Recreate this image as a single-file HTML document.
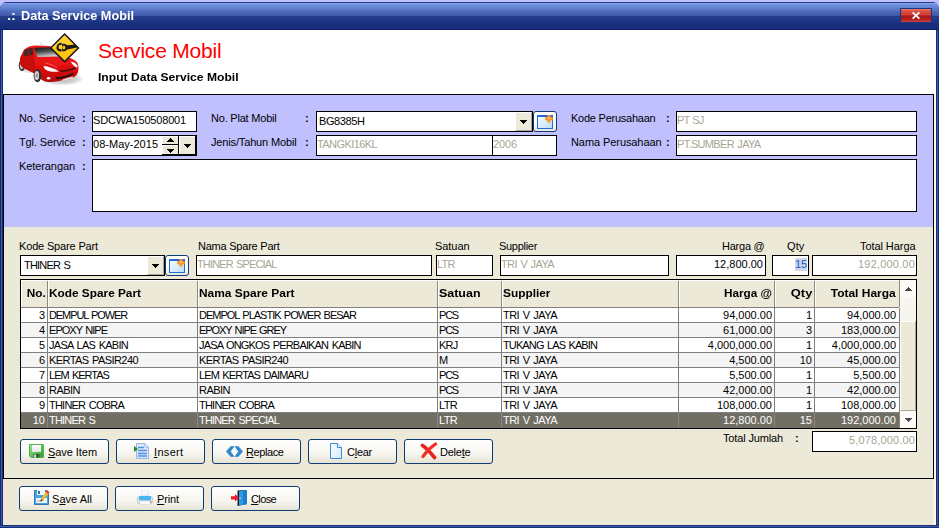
<!DOCTYPE html>
<html>
<head>
<meta charset="utf-8">
<title>Data Service Mobil</title>
<style>
*{box-sizing:border-box;margin:0;padding:0}
html,body{width:939px;height:528px;overflow:hidden}
body{background:#c0c0ff;font-family:"Liberation Sans","DejaVu Sans",sans-serif;font-size:11px;color:#000;position:relative}
.abs,.lbl,.inp,.btn,.cell{position:absolute}
#win{position:absolute;left:0;top:2px;width:939px;height:526px;background:linear-gradient(90deg,#14286e 0,#14286e 1px,#3e5cac 1px,#3e5cac 2px,#1a2e6e 2px,#1a2e6e 3px,#2a4eaa 3px,#2a4eaa 936px,#1a2e6e 936px,#1a2e6e 937px,#3e5cac 937px,#3e5cac 938px,#14286e 938px);border-radius:7px 7px 0 0}
#winb{position:absolute;left:0;top:525px;width:939px;height:3px;background:linear-gradient(#1c2e7c 0,#1c2e7c 1px,#3c5aa8 1px,#3c5aa8 2px,#14307a 2px)}
#title{position:absolute;left:0;top:0;width:939px;height:28px;border-radius:7px 7px 0 0;
 background:linear-gradient(#2a3a88 0,#2a3a88 1px,#8cb0f8 1px,#7898e6 2px,#6e8ede 3px,#6080d0 6px,#4c68b8 10px,#3e58a8 14px,#263e8c 14px,#20388a 18px,#18307a 22px,#1a2c7c 27px,#0c1c68 27px)}
#title .t{position:absolute;left:7px;top:6px;color:#fff;font-weight:bold;font-size:13.5px;white-space:nowrap;line-height:15px}
#close{position:absolute;left:901px;top:7px;width:30px;height:13px;box-shadow:0 0 0 1px #1a3488;
 background:linear-gradient(#f08878 0,#e25a4c 1px,#d03c34 6px,#a81818 7px,#b42420 11px,#d04840 13px)}
#hdr{position:absolute;left:3px;top:30px;width:933px;height:64px;background:#fff}
#pan1{position:absolute;left:3px;top:94px;width:931px;height:133px;background:#c0c0ff;border:1px solid #000;border-bottom:0}
#pan2{position:absolute;left:3px;top:227px;width:931px;height:252px;background:#ece9d8;border:1px solid #000;border-top:0}
#bg{position:absolute;left:3px;top:94px;width:933px;height:431px;background:linear-gradient(90deg,#ece9d8 0,#ece9d8 930px,#fbfae8 931px)}
.lbl{white-space:nowrap;line-height:13px;font-size:11px}
.inp{word-spacing:1px;background:#fff;border:1px solid #000;height:21px;line-height:17px;padding-left:0;white-space:nowrap;overflow:hidden;font-size:11px}
.dis{color:#a8a596}
.r{text-align:right;padding-right:3px;padding-left:0}
.btn{height:25px;width:89px;border:1px solid #103c74;border-radius:3px;background:linear-gradient(#ffffff 0,#f6f5ee 60%,#e6e3d4 100%);line-height:23px;font-size:11px;white-space:nowrap}
.btn>span{position:absolute;top:1px}
.btn u{text-decoration:underline}
.cell{word-spacing:1.2px;white-space:nowrap;overflow:hidden;height:15px;line-height:15px;font-size:11px}
.hd{font-weight:bold;word-spacing:0}
.cb{position:absolute;width:17px;height:19px;background:#ece9d8;border-left:1px solid #fff;border-top:1px solid #fff;border-right:1px solid #aca899;border-bottom:1px solid #aca899}
.ib{position:absolute;width:24px;height:21px;border:1px solid #103c74;border-radius:3px;background:linear-gradient(#fff 0,#fbfbf8 60%,#ebe8da 100%)}

</style>
</head>
<body>
<div id="win">
 <div id="title"><div class="t"><span style="display:inline-block;transform:scaleX(1.0909);transform-origin:left center;">.:</span></div><div class="t" style="left:21px"><span style="display:inline-block;transform:scaleX(0.9413);transform-origin:left center;">Data Service Mobil</span></div>
  <div id="close"><svg width="30" height="13" viewBox="0 0 30 13" style="position:absolute;left:0;top:0"><path d="M11.6 3.4L18.4 9.6M18.4 3.4L11.6 9.6" stroke="#fff" stroke-width="1.7" fill="none"/></svg></div>
 </div>
</div>
<div id="winb"></div>
<div id="bg"></div>
<div id="hdr">
 <div class="abs" style="left:95px;top:8px;font-size:21px;color:#f00;white-space:nowrap;line-height:26px"><span style="letter-spacing:-0.20px;">Service Mobil</span></div>
 <div class="abs" style="left:95px;top:41px;font-size:11px;font-weight:bold;white-space:nowrap;line-height:13px"><span style="display:inline-block;transform:scaleX(1.0998);transform-origin:left center;">Input Data Service Mobil</span></div>
</div>
<!--CAR--><svg class="abs" style="left:14px;top:31px" width="72" height="58" viewBox="14 31 72 58"><defs><linearGradient id="cws" x1="0" y1="0" x2="0.3" y2="1"><stop offset="0" stop-color="#141414"/><stop offset=".5" stop-color="#4a4a4a"/><stop offset="1" stop-color="#c8c8c8"/></linearGradient><linearGradient id="cbd" x1="0" y1="0" x2="0" y2="1"><stop offset="0" stop-color="#f02020"/><stop offset=".6" stop-color="#e01010"/><stop offset="1" stop-color="#b00808"/></linearGradient><radialGradient id="csh" cx=".5" cy=".5" r=".5"><stop offset="0" stop-color="#b0b0b0"/><stop offset=".7" stop-color="#d8d8d8"/><stop offset="1" stop-color="#ffffff"/></radialGradient><filter id="cbl" x="-10%" y="-10%" width="120%" height="120%"><feGaussianBlur stdDeviation="0.45"/></filter></defs><g filter="url(#cbl)"><ellipse cx="62" cy="79" rx="22" ry="6.5" fill="url(#csh)"/><ellipse cx="30" cy="70" rx="8" ry="3" fill="#e4e4e4"/><!-- rear wheel --><ellipse cx="22" cy="65.5" rx="3.3" ry="5.5" fill="#3a3a3a"/><ellipse cx="21.6" cy="65.5" rx="1.8" ry="3.6" fill="#c8c8c8"/><!-- body --><path d="M24 50 C27 47 31 45.6 36 45.6 L49 46 C52 46.4 54 48 57 51 L62 56 C68 57 74 59 77 62 C78.6 65 78.8 68 78.2 71 C77.6 74.5 76 76.5 73 77.5 L58 81.2 C52 82.4 47 82.2 44 81 L40.5 79 L33.8 73 L26 69.2 L21.5 66.5 C19.8 64 19.6 60 20.6 57 Z" fill="url(#cbd)"/><!-- darker side --><path d="M24 50 L20.6 57 C19.6 60 19.8 64 21.5 66.5 L26 69.2 L33.8 73 L35 64 L33.6 56 L34 48.5 C30 47.5 26 48.5 24 50Z" fill="#c80c0c"/><!-- side windows --><path d="M24.4 50.8 C26.5 49 29.5 48 32.6 48.2 L33 56 L23.8 55.8 C23.6 53.6 23.8 52 24.4 50.8Z" fill="#3c2a2a"/><path d="M28 49.4 L28.4 55.5" stroke="#c80c0c" stroke-width="1"/><!-- windshield --><path d="M34.2 47.8 L50.4 47.2 C52.4 47.6 53.8 49 55.4 51 L59.4 56.6 L37.6 57 C36 54 34.8 51 34.2 47.8Z" fill="url(#cws)"/><!-- hood highlight --><path d="M38 57.6 L60 57 C66 58 71 59.6 75 62 C70 62.6 62 64.4 56 67.4 C50 64.4 44 62 38.4 60.6Z" fill="#e81818"/><path d="M45 63 C50 64 54 65.6 57 67.6" stroke="#ff6a6a" stroke-width=".8" fill="none"/><!-- headlights --><path d="M43.6 66 C48 66.4 54 68.4 59 71.4 C54 72.4 48 71.4 45.4 69.4 C44.2 68.4 43.6 67.2 43.6 66Z" fill="#ffffff"/><path d="M70.6 61.6 C73.6 62 76.2 63.4 77.4 65.6 C77.6 66.6 77.4 67.4 76.8 67.8 C74.6 66.6 72 64.6 70.6 61.6Z" fill="#ffffff"/><!-- grille --><path d="M59.5 70.6 C65 70.4 71 69 75.6 67 L75.8 68.4 C71 70.6 65 71.8 60.4 71.8Z" fill="#3a0a0a"/><path d="M55.4 77.4 C62 77 69 75 73.4 72.6 L73.6 74.6 C69 77.2 62 79 56 79.2Z" fill="#2a0808"/><!-- fog lights / plate --><ellipse cx="48.6" cy="78.2" rx="1.8" ry="1.2" fill="#fff"/><path d="M62.6 79.2 L72.6 76.4 L72.8 78 L62.8 80.8Z" fill="#f4d8d8"/><!-- front wheel --><ellipse cx="37.4" cy="75.6" rx="3.8" ry="6.6" fill="#303030"/><ellipse cx="36.8" cy="75.6" rx="2.3" ry="4.6" fill="#d0d0d0"/><ellipse cx="36.8" cy="75.6" rx="1" ry="2" fill="#909090"/><!-- mirror --><path d="M28 55.6 L33 55 L33.2 57.6 L29 57.6Z" fill="#d01010"/><!-- antenna --><path d="M40 42.6 L43.4 46" stroke="#b0b0b0" stroke-width=".7"/></g><!-- sign --><g><path d="M64.6 33 L79.5 47.9 L64.6 62.8 L49.7 47.9Z" fill="#1a1a1a"/><path d="M64.6 35.2 L77.3 47.9 L64.6 60.6 L51.9 47.9Z" fill="#ffc410"/><path d="M64.6 35.2 L77.3 47.9 L51.9 47.9Z" fill="#ffd030"/><!-- wrench --><path d="M56.4 47.4 C56.6 44.4 59 42.6 61.8 42.8 L61.6 44.8 L58.8 45.2 L58.6 48.6 L61.4 49.4 L61.6 51.4 C58.6 51.6 56.4 50 56.4 47.4Z" fill="#1a1a1a"/><path d="M62 44 C64 43.4 66 44 67 45.2 L75.4 44.6 C76.6 45.6 77.2 46.6 77.2 47.4 L67.2 49.4 C66 51 64 51.6 62 51Z" fill="#1a1a1a"/><ellipse cx="63.8" cy="47.4" rx="1.5" ry="2" fill="#ffc410"/></g></svg><!--/CAR-->
<div id="pan1"></div>
<div id="pan2"></div>


<!-- top form -->
<div class="lbl" style="left:19px;top:112px;"><span style="letter-spacing:-0.08px;">No. Service</span></div><div class="lbl" style="left:82px;top:112px;font-weight:bold">:</div>
<div class="inp" style="left:92px;top:111px;width:105px"><span style="letter-spacing:-0.19px;">SDCWA150508001</span></div>
<div class="lbl" style="left:19px;top:136px;"><span style="letter-spacing:-0.13px;">Tgl. Service</span></div><div class="lbl" style="left:82px;top:136px;font-weight:bold">:</div>
<div class="inp" style="left:92px;top:135px;width:105px"><span style="letter-spacing:0.02px;">08-May-2015</span></div>
<div class="abs" style="left:162px;top:136px;width:34px;height:19px;background:#000"></div><div class="abs" style="left:162px;top:136px;width:16px;height:8px;background:#ece9d8;border-left:1px solid #fff;border-top:1px solid #fff"></div><div class="abs" style="left:162px;top:145px;width:16px;height:9px;background:#ece9d8;border-left:1px solid #fff;border-top:1px solid #fff"></div><div class="abs" style="left:179px;top:136px;width:16px;height:18px;background:#ece9d8;border-left:1px solid #fff;border-top:1px solid #fff"></div><svg class="abs" style="left:167px;top:138px" width="7" height="4" viewBox="0 0 7 4" shape-rendering="crispEdges"><path d="M3 0H4V1H5V2H6V3H7V4H0V3H1V2H2V1H3Z" fill="#000"/></svg><svg class="abs" style="left:167px;top:149px" width="7" height="4" viewBox="0 0 7 4" shape-rendering="crispEdges"><path d="M0 0H7V1H6V2H5V3H4V4H3V3H2V2H1V1H0Z" fill="#000"/></svg><svg class="abs" style="left:184px;top:144px" width="7" height="4" viewBox="0 0 7 4" shape-rendering="crispEdges"><path d="M0 0H7V1H6V2H5V3H4V4H3V3H2V2H1V1H0Z" fill="#000"/></svg>
<div class="lbl" style="left:19px;top:160px;"><span style="letter-spacing:-0.09px;">Keterangan</span></div><div class="lbl" style="left:82px;top:160px;font-weight:bold">:</div>
<div class="inp" style="left:92px;top:159px;width:825px;height:53px"></div>

<div class="lbl" style="left:211px;top:112px;"><span style="letter-spacing:-0.21px;">No. Plat Mobil</span></div><div class="lbl" style="left:305px;top:112px;font-weight:bold">:</div>
<div class="inp" style="left:316px;top:111px;width:217px;padding-left:2px;line-height:19px"><span style="letter-spacing:-0.40px;">BG8385H</span></div>
<div class="cb" style="left:515px;top:112px"></div><svg class="abs" style="left:520px;top:120px" width="7" height="4" viewBox="0 0 7 4" shape-rendering="crispEdges"><path d="M0 0H7V1H6V2H5V3H4V4H3V3H2V2H1V1H0Z" fill="#000"/></svg><div class="ib" style="left:533px;top:111px"></div><svg class="abs" style="left:537px;top:115px" width="16" height="14" viewBox="0 0 16 14"><defs><linearGradient id="gn1" x1="0" y1="0" x2="1" y2="1"><stop offset="0" stop-color="#fff"/><stop offset="1" stop-color="#b8dcf8"/></linearGradient></defs><rect x="0.5" y="0.5" width="15" height="13" fill="url(#gn1)" stroke="#1a6fd8"/><rect x="0" y="0" width="16" height="2" fill="#1a6fd8"/><path d="M12 0V7.5M8.2 3.7H15.8" stroke="#ff8a1c" stroke-width="3.2" fill="none"/><path d="M12 1V6.5M9.2 3.7H14.8" stroke="#ffc070" stroke-width="1" fill="none"/></svg>
<div class="lbl" style="left:211px;top:136px;"><span style="letter-spacing:-0.15px;">Jenis/Tahun Mobil</span></div><div class="lbl" style="left:305px;top:136px;font-weight:bold">:</div>
<div class="inp dis" style="left:316px;top:135px;width:177px"><span style="letter-spacing:-0.58px;">TANGKI16KL</span></div>
<div class="inp dis" style="left:492px;top:135px;width:65px"><span style="letter-spacing:-0.12px;">2006</span></div>

<div class="lbl" style="left:571px;top:112px;"><span style="letter-spacing:-0.24px;">Kode Perusahaan</span></div><div class="lbl" style="left:666px;top:112px;font-weight:bold">:</div>
<div class="inp dis" style="left:676px;top:111px;width:241px"><span style="letter-spacing:-0.85px;">PT SJ</span></div>
<div class="lbl" style="left:571px;top:136px;"><span style="letter-spacing:-0.08px;">Nama Perusahaan</span></div><div class="lbl" style="left:666px;top:136px;font-weight:bold">:</div>
<div class="inp dis" style="left:676px;top:135px;width:241px"><span style="letter-spacing:-0.67px;">PT.SUMBER JAYA</span></div>

<!-- spare part entry -->
<div class="lbl" style="left:19px;top:240px;"><span style="letter-spacing:-0.16px;">Kode Spare Part</span></div>
<div class="lbl" style="left:198px;top:240px;"><span style="letter-spacing:-0.23px;">Nama Spare Part</span></div>
<div class="lbl" style="left:435px;top:240px;"><span style="letter-spacing:-0.06px;">Satuan</span></div>
<div class="lbl" style="left:499px;top:240px;"><span style="letter-spacing:-0.29px;">Supplier</span></div>
<div class="lbl" style="left:722px;top:240px;"><span style="letter-spacing:-0.24px;">Harga @</span></div>
<div class="lbl" style="left:787px;top:240px;"><span style="letter-spacing:0.12px;">Qty</span></div>
<div class="lbl" style="left:860px;top:240px;"><span style="letter-spacing:-0.07px;">Total Harga</span></div>
<div class="inp" style="left:20px;top:255px;width:145px;padding-left:3px;line-height:19px"><span style="letter-spacing:-0.79px;">THINER S</span></div>
<div class="cb" style="left:147px;top:256px"></div><svg class="abs" style="left:152px;top:264px" width="7" height="4" viewBox="0 0 7 4" shape-rendering="crispEdges"><path d="M0 0H7V1H6V2H5V3H4V4H3V3H2V2H1V1H0Z" fill="#000"/></svg><div class="ib" style="left:165px;top:255px"></div><svg class="abs" style="left:169px;top:259px" width="16" height="14" viewBox="0 0 16 14"><defs><linearGradient id="gn2" x1="0" y1="0" x2="1" y2="1"><stop offset="0" stop-color="#fff"/><stop offset="1" stop-color="#b8dcf8"/></linearGradient></defs><rect x="0.5" y="0.5" width="15" height="13" fill="url(#gn2)" stroke="#1a6fd8"/><rect x="0" y="0" width="16" height="2" fill="#1a6fd8"/><path d="M12 0V7.5M8.2 3.7H15.8" stroke="#ff8a1c" stroke-width="3.2" fill="none"/><path d="M12 1V6.5M9.2 3.7H14.8" stroke="#ffc070" stroke-width="1" fill="none"/></svg>
<div class="inp dis" style="left:196px;top:255px;width:236px"><span style="letter-spacing:-0.85px;">THINER SPECIAL</span></div>
<div class="inp dis" style="left:436px;top:255px;width:57px;padding-left:0"><span style="letter-spacing:-0.82px;">LTR</span></div>
<div class="inp dis" style="left:500px;top:255px;width:169px"><span style="letter-spacing:-0.60px;">TRI V JAYA</span></div>
<div class="inp r" style="left:676px;top:255px;width:90px;padding-right:2px"><span style="letter-spacing:0.01px;">12,800.00</span></div>
<div class="inp r" style="left:772px;top:255px;width:37px;padding-right:1px"><span style="background:#d2d6de;color:#0c5ce8;display:inline-block;height:13px;line-height:13px;margin-top:2px;vertical-align:top"><span style="letter-spacing:-0.12px;">15</span></span></div>
<div class="inp r dis" style="left:812px;top:255px;width:105px;padding-right:1px"><span style="letter-spacing:0.19px;">192,000.00</span></div>

<!--GRID-BEGIN-->
<div class="abs" style="left:20px;top:279px;width:897px;height:150px;border:1px solid #000;background:#fff"></div>
<div class="abs" style="left:21px;top:280px;width:878px;height:27px;background:#ece9d8"></div>
<div class="abs" style="left:21px;top:307px;width:878px;height:1px;background:#808080"></div>
<div class="abs" style="left:21px;top:280px;width:1px;height:27px;background:#fff"></div>
<div class="abs" style="left:47px;top:280px;width:1px;height:27px;background:#8c8a80"></div>
<div class="abs" style="left:48px;top:280px;width:1px;height:27px;background:#fff"></div>
<div class="abs" style="left:197px;top:280px;width:1px;height:27px;background:#8c8a80"></div>
<div class="abs" style="left:198px;top:280px;width:1px;height:27px;background:#fff"></div>
<div class="abs" style="left:437px;top:280px;width:1px;height:27px;background:#8c8a80"></div>
<div class="abs" style="left:438px;top:280px;width:1px;height:27px;background:#fff"></div>
<div class="abs" style="left:501px;top:280px;width:1px;height:27px;background:#8c8a80"></div>
<div class="abs" style="left:502px;top:280px;width:1px;height:27px;background:#fff"></div>
<div class="abs" style="left:678px;top:280px;width:1px;height:27px;background:#8c8a80"></div>
<div class="abs" style="left:679px;top:280px;width:1px;height:27px;background:#fff"></div>
<div class="abs" style="left:774px;top:280px;width:1px;height:27px;background:#8c8a80"></div>
<div class="abs" style="left:775px;top:280px;width:1px;height:27px;background:#fff"></div>
<div class="abs" style="left:814px;top:280px;width:1px;height:27px;background:#8c8a80"></div>
<div class="abs" style="left:815px;top:280px;width:1px;height:27px;background:#fff"></div>
<div class="abs" style="left:899px;top:280px;width:1px;height:27px;background:#8c8a80"></div>
<div class="abs" style="left:21px;top:280px;width:878px;height:1px;background:#fff"></div>
<div class="cell hd" style="left:21px;top:286px;width:26px;text-align:right;padding-right:1px"><span style="display:inline-block;transform:scaleX(1.0714);transform-origin:right center;">No.</span></div>
<div class="cell hd" style="left:48px;top:286px;width:149px;padding-left:1px"><span style="display:inline-block;transform:scaleX(1.0748);transform-origin:left center;">Kode Spare Part</span></div>
<div class="cell hd" style="left:198px;top:286px;width:239px;padding-left:1px"><span style="display:inline-block;transform:scaleX(1.0846);transform-origin:left center;">Nama Spare Part</span></div>
<div class="cell hd" style="left:438px;top:286px;width:63px;padding-left:1px"><span style="display:inline-block;transform:scaleX(1.1312);transform-origin:left center;">Satuan</span></div>
<div class="cell hd" style="left:502px;top:286px;width:176px;padding-left:1px"><span style="display:inline-block;transform:scaleX(1.0792);transform-origin:left center;">Supplier</span></div>
<div class="cell hd" style="left:679px;top:286px;width:95px;text-align:right;padding-right:2px"><span style="display:inline-block;transform:scaleX(1.0674);transform-origin:right center;">Harga @</span></div>
<div class="cell hd" style="left:775px;top:286px;width:39px;text-align:right;padding-right:2px"><span style="display:inline-block;transform:scaleX(1.1721);transform-origin:right center;">Qty</span></div>
<div class="cell hd" style="left:815px;top:286px;width:84px;text-align:right;padding-right:3px"><span style="display:inline-block;transform:scaleX(1.0887);transform-origin:right center;">Total Harga</span></div>
<div class="abs" style="left:21px;top:308px;width:878px;height:14px;background:#fff"></div>
<div class="abs" style="left:21px;top:322px;width:878px;height:1px;background:#808080"></div>
<div class="cell" style="left:21px;top:308px;width:26px;text-align:right;padding-right:2px;color:#000">3</div>
<div class="cell" style="left:48px;top:308px;width:149px;padding-left:1px;color:#000"><span style="letter-spacing:-1.10px;">DEMPUL POWER</span></div>
<div class="cell" style="left:198px;top:308px;width:239px;padding-left:1px;color:#000"><span style="letter-spacing:-1.00px;">DEMPOL PLASTIK POWER BESAR</span></div>
<div class="cell" style="left:438px;top:308px;width:63px;padding-left:1px;color:#000"><span style="letter-spacing:-1.21px;">PCS</span></div>
<div class="cell" style="left:502px;top:308px;width:176px;padding-left:1px;color:#000"><span style="letter-spacing:-0.55px;">TRI V JAYA</span></div>
<div class="cell" style="left:679px;top:308px;width:95px;text-align:right;padding-right:2px;color:#000">94,000.00</div>
<div class="cell" style="left:775px;top:308px;width:39px;text-align:right;padding-right:2px;color:#000">1</div>
<div class="cell" style="left:815px;top:308px;width:84px;text-align:right;padding-right:3px;color:#000">94,000.00</div>
<div class="abs" style="left:21px;top:323px;width:878px;height:14px;background:#f4f4f4"></div>
<div class="abs" style="left:21px;top:337px;width:878px;height:1px;background:#808080"></div>
<div class="cell" style="left:21px;top:323px;width:26px;text-align:right;padding-right:2px;color:#000">4</div>
<div class="cell" style="left:48px;top:323px;width:149px;padding-left:1px;color:#000"><span style="letter-spacing:-0.96px;">EPOXY NIPE</span></div>
<div class="cell" style="left:198px;top:323px;width:239px;padding-left:1px;color:#000"><span style="letter-spacing:-1.07px;">EPOXY NIPE GREY</span></div>
<div class="cell" style="left:438px;top:323px;width:63px;padding-left:1px;color:#000"><span style="letter-spacing:-1.21px;">PCS</span></div>
<div class="cell" style="left:502px;top:323px;width:176px;padding-left:1px;color:#000"><span style="letter-spacing:-0.55px;">TRI V JAYA</span></div>
<div class="cell" style="left:679px;top:323px;width:95px;text-align:right;padding-right:2px;color:#000">61,000.00</div>
<div class="cell" style="left:775px;top:323px;width:39px;text-align:right;padding-right:2px;color:#000">3</div>
<div class="cell" style="left:815px;top:323px;width:84px;text-align:right;padding-right:3px;color:#000">183,000.00</div>
<div class="abs" style="left:21px;top:338px;width:878px;height:14px;background:#fff"></div>
<div class="abs" style="left:21px;top:352px;width:878px;height:1px;background:#808080"></div>
<div class="cell" style="left:21px;top:338px;width:26px;text-align:right;padding-right:2px;color:#000">5</div>
<div class="cell" style="left:48px;top:338px;width:149px;padding-left:1px;color:#000"><span style="letter-spacing:-0.73px;">JASA LAS KABIN</span></div>
<div class="cell" style="left:198px;top:338px;width:239px;padding-left:1px;color:#000"><span style="letter-spacing:-0.83px;">JASA ONGKOS PERBAIKAN KABIN</span></div>
<div class="cell" style="left:438px;top:338px;width:63px;padding-left:1px;color:#000"><span style="letter-spacing:-0.76px;">KRJ</span></div>
<div class="cell" style="left:502px;top:338px;width:176px;padding-left:1px;color:#000"><span style="letter-spacing:-0.88px;">TUKANG LAS KABIN</span></div>
<div class="cell" style="left:679px;top:338px;width:95px;text-align:right;padding-right:2px;color:#000">4,000,000.00</div>
<div class="cell" style="left:775px;top:338px;width:39px;text-align:right;padding-right:2px;color:#000">1</div>
<div class="cell" style="left:815px;top:338px;width:84px;text-align:right;padding-right:3px;color:#000">4,000,000.00</div>
<div class="abs" style="left:21px;top:353px;width:878px;height:14px;background:#f4f4f4"></div>
<div class="abs" style="left:21px;top:367px;width:878px;height:1px;background:#808080"></div>
<div class="cell" style="left:21px;top:353px;width:26px;text-align:right;padding-right:2px;color:#000">6</div>
<div class="cell" style="left:48px;top:353px;width:149px;padding-left:1px;color:#000"><span style="letter-spacing:-0.59px;">KERTAS PASIR240</span></div>
<div class="cell" style="left:198px;top:353px;width:239px;padding-left:1px;color:#000"><span style="letter-spacing:-0.59px;">KERTAS PASIR240</span></div>
<div class="cell" style="left:438px;top:353px;width:63px;padding-left:1px;color:#000"><span style="letter-spacing:-0.67px;">M</span></div>
<div class="cell" style="left:502px;top:353px;width:176px;padding-left:1px;color:#000"><span style="letter-spacing:-0.55px;">TRI V JAYA</span></div>
<div class="cell" style="left:679px;top:353px;width:95px;text-align:right;padding-right:2px;color:#000">4,500.00</div>
<div class="cell" style="left:775px;top:353px;width:39px;text-align:right;padding-right:2px;color:#000">10</div>
<div class="cell" style="left:815px;top:353px;width:84px;text-align:right;padding-right:3px;color:#000">45,000.00</div>
<div class="abs" style="left:21px;top:368px;width:878px;height:14px;background:#fff"></div>
<div class="abs" style="left:21px;top:382px;width:878px;height:1px;background:#808080"></div>
<div class="cell" style="left:21px;top:368px;width:26px;text-align:right;padding-right:2px;color:#000">7</div>
<div class="cell" style="left:48px;top:368px;width:149px;padding-left:1px;color:#000"><span style="letter-spacing:-0.99px;">LEM KERTAS</span></div>
<div class="cell" style="left:198px;top:368px;width:239px;padding-left:1px;color:#000"><span style="letter-spacing:-0.88px;">LEM KERTAS DAIMARU</span></div>
<div class="cell" style="left:438px;top:368px;width:63px;padding-left:1px;color:#000"><span style="letter-spacing:-1.21px;">PCS</span></div>
<div class="cell" style="left:502px;top:368px;width:176px;padding-left:1px;color:#000"><span style="letter-spacing:-0.55px;">TRI V JAYA</span></div>
<div class="cell" style="left:679px;top:368px;width:95px;text-align:right;padding-right:2px;color:#000">5,500.00</div>
<div class="cell" style="left:775px;top:368px;width:39px;text-align:right;padding-right:2px;color:#000">1</div>
<div class="cell" style="left:815px;top:368px;width:84px;text-align:right;padding-right:3px;color:#000">5,500.00</div>
<div class="abs" style="left:21px;top:383px;width:878px;height:14px;background:#f4f4f4"></div>
<div class="abs" style="left:21px;top:397px;width:878px;height:1px;background:#808080"></div>
<div class="cell" style="left:21px;top:383px;width:26px;text-align:right;padding-right:2px;color:#000">8</div>
<div class="cell" style="left:48px;top:383px;width:149px;padding-left:1px;color:#000"><span style="letter-spacing:-0.53px;">RABIN</span></div>
<div class="cell" style="left:198px;top:383px;width:239px;padding-left:1px;color:#000"><span style="letter-spacing:-0.53px;">RABIN</span></div>
<div class="cell" style="left:438px;top:383px;width:63px;padding-left:1px;color:#000"><span style="letter-spacing:-1.21px;">PCS</span></div>
<div class="cell" style="left:502px;top:383px;width:176px;padding-left:1px;color:#000"><span style="letter-spacing:-0.55px;">TRI V JAYA</span></div>
<div class="cell" style="left:679px;top:383px;width:95px;text-align:right;padding-right:2px;color:#000">42,000.00</div>
<div class="cell" style="left:775px;top:383px;width:39px;text-align:right;padding-right:2px;color:#000">1</div>
<div class="cell" style="left:815px;top:383px;width:84px;text-align:right;padding-right:3px;color:#000">42,000.00</div>
<div class="abs" style="left:21px;top:398px;width:878px;height:14px;background:#fff"></div>
<div class="abs" style="left:21px;top:412px;width:878px;height:1px;background:#808080"></div>
<div class="cell" style="left:21px;top:398px;width:26px;text-align:right;padding-right:2px;color:#000">9</div>
<div class="cell" style="left:48px;top:398px;width:149px;padding-left:1px;color:#000"><span style="letter-spacing:-0.78px;">THINER COBRA</span></div>
<div class="cell" style="left:198px;top:398px;width:239px;padding-left:1px;color:#000"><span style="letter-spacing:-0.78px;">THINER COBRA</span></div>
<div class="cell" style="left:438px;top:398px;width:63px;padding-left:1px;color:#000"><span style="letter-spacing:-0.66px;">LTR</span></div>
<div class="cell" style="left:502px;top:398px;width:176px;padding-left:1px;color:#000"><span style="letter-spacing:-0.55px;">TRI V JAYA</span></div>
<div class="cell" style="left:679px;top:398px;width:95px;text-align:right;padding-right:2px;color:#000">108,000.00</div>
<div class="cell" style="left:775px;top:398px;width:39px;text-align:right;padding-right:2px;color:#000">1</div>
<div class="cell" style="left:815px;top:398px;width:84px;text-align:right;padding-right:3px;color:#000">108,000.00</div>
<div class="abs" style="left:21px;top:413px;width:878px;height:14px;background:#716f64"></div>
<div class="abs" style="left:21px;top:427px;width:878px;height:1px;background:#716f64"></div>
<div class="cell" style="left:21px;top:413px;width:26px;text-align:right;padding-right:2px;color:#fff">10</div>
<div class="cell" style="left:48px;top:413px;width:149px;padding-left:1px;color:#fff"><span style="letter-spacing:-0.82px;">THINER S</span></div>
<div class="cell" style="left:198px;top:413px;width:239px;padding-left:1px;color:#fff"><span style="letter-spacing:-0.83px;">THINER SPECIAL</span></div>
<div class="cell" style="left:438px;top:413px;width:63px;padding-left:1px;color:#fff"><span style="letter-spacing:-0.66px;">LTR</span></div>
<div class="cell" style="left:502px;top:413px;width:176px;padding-left:1px;color:#fff"><span style="letter-spacing:-0.55px;">TRI V JAYA</span></div>
<div class="cell" style="left:679px;top:413px;width:95px;text-align:right;padding-right:2px;color:#fff">12,800.00</div>
<div class="cell" style="left:775px;top:413px;width:39px;text-align:right;padding-right:2px;color:#fff">15</div>
<div class="cell" style="left:815px;top:413px;width:84px;text-align:right;padding-right:3px;color:#fff">192,000.00</div>
<div class="abs" style="left:47px;top:308px;width:1px;height:105px;background:#808080"></div>
<div class="abs" style="left:47px;top:413px;width:1px;height:15px;background:#8a887d"></div>
<div class="abs" style="left:197px;top:308px;width:1px;height:105px;background:#808080"></div>
<div class="abs" style="left:197px;top:413px;width:1px;height:15px;background:#8a887d"></div>
<div class="abs" style="left:437px;top:308px;width:1px;height:105px;background:#808080"></div>
<div class="abs" style="left:437px;top:413px;width:1px;height:15px;background:#8a887d"></div>
<div class="abs" style="left:501px;top:308px;width:1px;height:105px;background:#808080"></div>
<div class="abs" style="left:501px;top:413px;width:1px;height:15px;background:#8a887d"></div>
<div class="abs" style="left:678px;top:308px;width:1px;height:105px;background:#808080"></div>
<div class="abs" style="left:678px;top:413px;width:1px;height:15px;background:#8a887d"></div>
<div class="abs" style="left:774px;top:308px;width:1px;height:105px;background:#808080"></div>
<div class="abs" style="left:774px;top:413px;width:1px;height:15px;background:#8a887d"></div>
<div class="abs" style="left:814px;top:308px;width:1px;height:105px;background:#808080"></div>
<div class="abs" style="left:814px;top:413px;width:1px;height:15px;background:#8a887d"></div>
<div class="abs" style="left:899px;top:308px;width:1px;height:105px;background:#808080"></div>
<div class="abs" style="left:899px;top:413px;width:1px;height:15px;background:#8a887d"></div>
<div class="abs" style="left:900px;top:280px;width:16px;height:148px;background:#f6f5ee"></div>
<div class="abs" style="left:900px;top:280px;width:16px;height:17px;background:#fbfaf7"></div>
<div class="abs" style="left:900px;top:321px;width:16px;height:90px;background:#ece9d8;border-left:1px solid #fff;border-top:1px solid #fff;border-right:1px solid #aca899;border-bottom:1px solid #aca899"></div>
<div class="abs" style="left:900px;top:411px;width:16px;height:17px;background:#fbfaf7"></div>
<svg class="abs" style="left:905px;top:287px" width="7" height="4" viewBox="0 0 7 4" shape-rendering="crispEdges"><path d="M3 0H4V1H5V2H6V3H7V4H0V3H1V2H2V1H3Z" fill="#4c4c4c"/></svg>
<svg class="abs" style="left:905px;top:418px" width="7" height="4" viewBox="0 0 7 4" shape-rendering="crispEdges"><path d="M0 0H7V1H6V2H5V3H4V4H3V3H2V2H1V1H0Z" fill="#4c4c4c"/></svg>

<div class="lbl" style="left:723px;top:432px;"><span style="letter-spacing:-0.15px;">Total Jumlah</span></div><div class="lbl" style="left:795px;top:432px;font-weight:bold">:</div>
<div class="inp r dis" style="left:812px;top:431px;width:105px;padding-right:1px"><span style="letter-spacing:0.15px;">5,078,000.00</span></div>

<div class="btn" style="left:20px;top:439px"><span style="left:27px"><span style="letter-spacing:-0.06px;"><u>S</u>ave Item</span></span></div><svg class="abs" style="left:29px;top:444px" width="15" height="14" viewBox="0 0 15 14"><defs><linearGradient id="gsi" x1="0" y1="0" x2="1" y2="1"><stop offset="0" stop-color="#9be494"/><stop offset=".5" stop-color="#5cc458"/><stop offset="1" stop-color="#2f9a34"/></linearGradient><linearGradient id="gsl" x1="0" y1="0" x2="0" y2="1"><stop offset="0" stop-color="#fff"/><stop offset="1" stop-color="#dfe8df"/></linearGradient></defs><path d="M0.5 0.5H14.5V13.5H2L0.5 12Z" fill="url(#gsi)" stroke="#4fb44c"/><rect x="3" y="1" width="9" height="7" fill="url(#gsl)"/><rect x="4.5" y="10" width="6" height="3.5" fill="#3a5a3c"/><rect x="5.2" y="10.6" width="1.8" height="2.9" fill="#eef4ee"/></svg>
<div class="btn" style="left:116px;top:439px"><span style="left:37px"><span style="letter-spacing:0.33px;"><u>I</u>nsert</span></span></div><svg class="abs" style="left:134px;top:443px" width="16" height="16" viewBox="0 0 16 16"><path d="M2.5 0.5H11L14.5 4V15.5H2.5Z" fill="#dfe9fb" stroke="#9ab4e4"/><path d="M11 0.5V4H14.5" fill="#f4f8ff" stroke="#9ab4e4"/><path d="M4 4.5H10M4 7.5H13M4 10.5H13M4 13H13" stroke="#4a90de" stroke-width="1.4"/><path d="M0 3L4 6L0 9Z" fill="#1f8a2a"/></svg>
<div class="btn" style="left:212px;top:439px"><span style="left:33px"><span style="letter-spacing:-0.41px;"><u>R</u>eplace</span></span></div><svg class="abs" style="left:226px;top:446px" width="17" height="11" viewBox="0 0 17 11"><path d="M4.8 0.4L0.3 5.5L4.8 10.6H8L4.4 5.5L8 0.4Z" fill="#2a8ad8" stroke="#1a6ab8" stroke-width=".5"/><path d="M12.2 0.4L16.7 5.5L12.2 10.6H9L12.6 5.5L9 0.4Z" fill="#2a8ad8" stroke="#1a6ab8" stroke-width=".5"/></svg>
<div class="btn" style="left:308px;top:439px"><span style="left:38px"><span style="letter-spacing:-0.26px;">C<u>l</u>ear</span></span></div><svg class="abs" style="left:330px;top:443px" width="12" height="16" viewBox="0 0 12 16"><defs><linearGradient id="gcl" x1="0" y1="0" x2="1" y2="1"><stop offset="0" stop-color="#fff"/><stop offset="1" stop-color="#d4e8fa"/></linearGradient></defs><path d="M0.5 0.5H7.5L11.5 4.5V15.5H0.5Z" fill="url(#gcl)" stroke="#3a8ad8"/><path d="M7.5 0.5V4.5H11.5" fill="#eef6ff" stroke="#3a8ad8"/></svg>
<div class="btn" style="left:404px;top:439px"><span style="left:35px"><span style="letter-spacing:-0.22px;">Dele<u>t</u>e</span></span></div><svg class="abs" style="left:420px;top:442px" width="19" height="18" viewBox="0 0 19 18"><path d="M2.5 3.5C5 5 10 10 14.5 15.5" stroke="#e8201c" stroke-width="3.6" stroke-linecap="round" fill="none"/><path d="M15.5 2C11 5 6 10 3 14.5" stroke="#f03028" stroke-width="3.2" stroke-linecap="round" fill="none"/></svg>

<div class="btn" style="left:19px;top:486px"><span style="left:32px"><span style="letter-spacing:0.03px;">S<u>a</u>ve All</span></span></div><svg class="abs" style="left:34px;top:489px" width="16" height="16" viewBox="0 0 16 16"><path d="M0.5 1.5H12.5L14.5 3.5V15.5H0.5Z" fill="#4aa4e0" stroke="#2a7ab8"/><rect x="3" y="1" width="8" height="5" fill="#f4f8fc"/><rect x="4" y="2" width="2" height="3" fill="#2a7ab8"/><rect x="2" y="9" width="11" height="5" fill="#eef2f6"/><rect x="3" y="11" width="5" height="2" fill="#c8ccd4"/><path d="M13 1L15.5 3.5L9 11.5L6.5 12.5L7 10Z" fill="#f4b828"/><path d="M13 1L15.5 3.5L14 5L11.7 2.6Z" fill="#d83838"/><path d="M6.5 12.5L7 10L9 11.5Z" fill="#403020"/></svg>
<div class="btn" style="left:115px;top:486px"><span style="left:41px"><span style="letter-spacing:-0.12px;"><u>P</u>rint</span></span></div><svg class="abs" style="left:137px;top:490px" width="16" height="15" viewBox="0 0 16 15"><rect x="4" y="0" width="8" height="7" fill="#dfe8f0"/><rect x="5" y="0" width="6" height="5" fill="#f4f8fc"/><rect x="0.5" y="6.5" width="15" height="7" rx="1.5" fill="#e4e8ec" stroke="#c4ccd4"/><rect x="2" y="6" width="12" height="4.5" rx="1" fill="#4ab4ec"/><rect x="3" y="11" width="10" height="3.5" fill="#fafcfe" stroke="#c8d0d8" stroke-width=".6"/><rect x="13" y="11" width="1.5" height="1.5" fill="#f08040"/></svg>
<div class="btn" style="left:211px;top:486px"><span style="left:39px"><span style="letter-spacing:-0.63px;"><u>C</u>lose</span></span></div><svg class="abs" style="left:231px;top:490px" width="17" height="16" viewBox="0 0 17 16"><path d="M6.5 0.5L16 0V14L6.5 16Z" fill="#101820"/><path d="M8 1.2L16 0V14L8 15.5Z" fill="#2a9ae4"/><path d="M12 0.6L16 0V14L12 14.8Z" fill="#1a80cc"/><rect x="8.6" y="7.5" width="1" height="1.6" fill="#cfe8fa"/><path d="M0 6.2H4V4L8 7.8L4 11.6V9.4H0Z" fill="#f01828"/></svg>
</body>
</html>
